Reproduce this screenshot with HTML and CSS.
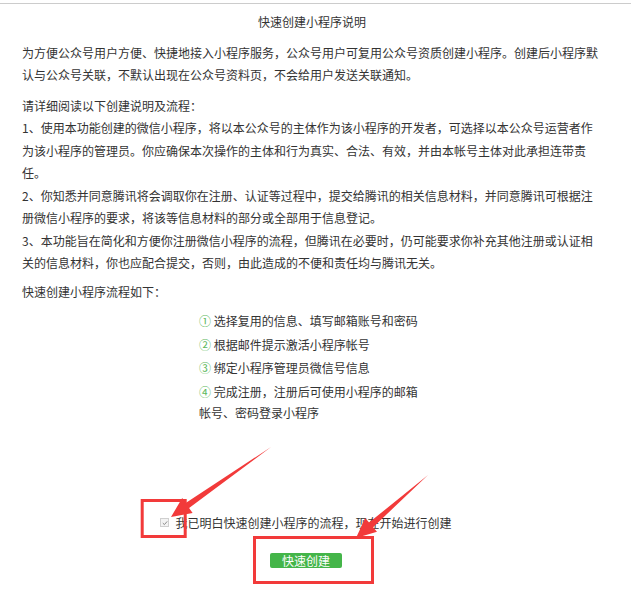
FILE: index.html
```html
<!DOCTYPE html>
<html lang="zh-CN">
<head>
<meta charset="utf-8">
<title>快速创建小程序说明</title>
<link rel="stylesheet" href="styles.css">
</head>
<body>
<div class="page">
  <h1 class="title">快速创建小程序说明</h1>
  <p class="para">为方便公众号用户方便、快捷地接入小程序服务，公众号用户可复用公众号资质创建小程序。创建后小程序默认与公众号关联，不默认出现在公众号资料页，不会给用户发送关联通知。</p>
  <div class="para">
    <div>请详细阅读以下创建说明及流程：</div>
    <div>1、使用本功能创建的微信小程序，将以本公众号的主体作为该小程序的开发者，可选择以本公众号运营者作为该小程序的管理员。你应确保本次操作的主体和行为真实、合法、有效，并由本帐号主体对此承担连带责任。</div>
    <div>2、你知悉并同意腾讯将会调取你在注册、认证等过程中，提交给腾讯的相关信息材料，并同意腾讯可根据注册微信小程序的要求，将该等信息材料的部分或全部用于信息登记。</div>
    <div>3、本功能旨在简化和方便你注册微信小程序的流程，但腾讯在必要时，仍可能要求你补充其他注册或认证相关的信息材料，你也应配合提交，否则，由此造成的不便和责任均与腾讯无关。</div>
  </div>
  <p class="para flow-title">快速创建小程序流程如下：</p>
  <ol class="steps">
    <li><span class="num">①</span> 选择复用的信息、填写邮箱账号和密码</li>
    <li><span class="num">②</span> 根据邮件提示激活小程序帐号</li>
    <li><span class="num">③</span> 绑定小程序管理员微信号信息</li>
    <li><span class="num">④</span> 完成注册，注册后可使用小程序的邮箱帐号、密码登录小程序</li>
  </ol>
  <div class="agree">
    <span class="check"><svg width="6" height="6" viewBox="0 0 6 6"><path d="M0.8 3.1 L2.4 4.6 L5.2 1.4" fill="none" stroke="#8a8a8a" stroke-width="1"/></svg></span>
    <span class="agree-text">我已明白快速创建小程序的流程，现在开始进行创建</span>
  </div>
  <div class="actions">
    <button class="btn" type="button">快速创建</button>
  </div>
</div>
<svg class="marks" width="631" height="594" viewBox="0 0 631 594">
  <rect x="142.2" y="500.5" width="43" height="36" fill="none" stroke="#f23a3a" stroke-width="3"/>
  <rect x="254.5" y="537.5" width="118" height="45" fill="none" stroke="#f23a3a" stroke-width="3"/>
  <polygon points="271,447 189.1,508 192.6,512.9 171,517 182.2,498.1 185.7,503" fill="#f23a3a"/>
  <polygon points="428,475 373.1,527.2 377,531.7 356,538 365.2,518.1 369.1,522.6" fill="#f23a3a"/>
</svg>
</body>
</html>
```
FILE: styles.css
```css
html, body {
  margin: 0;
  padding: 0;
  background: #fff;
}
body {
  position: relative;
  width: 631px;
  height: 594px;
  overflow: hidden;
  font-family: "Noto Sans CJK SC", "Microsoft YaHei", sans-serif;
  font-size: 12px;
  color: #333;
}
.page {
  margin-top: 3px;
  border-top: 1px solid #cccccc;
  padding: 7px 29px 0 22px;
}
.title {
  margin: 0;
  font-size: 12px;
  font-weight: normal;
  line-height: 22.5px;
  text-align: center;
  color: #333;
}
.para {
  margin: 8px 0 0;
  line-height: 22.5px;
}
.flow-title {
  margin-top: 6px;
}
.steps {
  list-style: none;
  width: 226px;
  margin: 7px auto 0;
  padding: 0;
}
.steps li {
  line-height: 21.5px;
  margin-bottom: 2px;
}
.num {
  color: #5cb85c;
  font-size: 12px;
}
.agree {
  display: flex;
  align-items: center;
  justify-content: center;
  gap: 6px;
  margin-top: 89px;
  padding-right: 12px;
  line-height: 20px;
}
.check {
  width: 7px;
  height: 7px;
  border: 1px solid #cfcfcf;
  background: #f3f3f3;
  display: flex;
  align-items: center;
  justify-content: center;
}
.actions {
  display: flex;
  justify-content: center;
  padding-right: 12px;
  margin-top: 20px;
}
.btn {
  border: 0;
  margin: 0;
  padding: 0 12px;
  height: 15px;
  line-height: 15px;
  background: #44b549;
  color: #fff;
  font-family: inherit;
  font-size: 12px;
  border-radius: 2px;
}
.marks {
  position: absolute;
  top: 0;
  left: 0;
  pointer-events: none;
}
```
